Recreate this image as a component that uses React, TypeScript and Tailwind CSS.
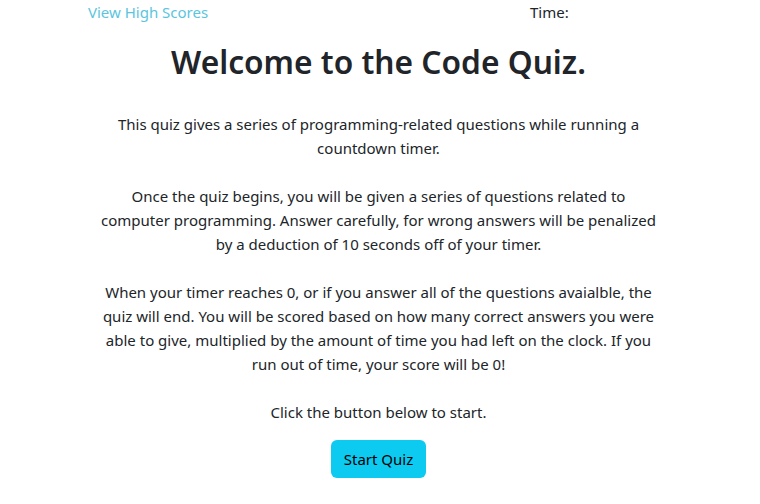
import React from "react";

export default function App() {
  return (
    <div className="min-h-screen bg-white text-[#212529] font-['Noto_Sans',sans-serif] text-[15px] leading-6">
      {/* header bar */}
      <header className="flex h-6">
        <a href="#" className="ml-[88px] w-[442px] text-[#5bc5de]">
          View High Scores
        </a>
        <span>Time:</span>
      </header>

      <main className="flex flex-col items-center pr-[3px]">
        <h1 className="mt-[19px] text-[31.7px] font-semibold leading-[37px]">Welcome to the Code Quiz.</h1>

        <div className="mt-[32px] w-[566px] text-center">
          <p className="mb-6">
            This quiz gives a series of programming-related questions while running a countdown timer.
          </p>
          <p className="mb-6">
            Once the quiz begins, you will be given a series of questions related to computer programming. Answer
            carefully, for wrong answers will be penalized by a deduction of 10 seconds off of your timer.
          </p>
          <p className="mb-6">
            When your timer reaches 0, or if you answer all of the questions avaialble, the quiz will end. You will be
            scored based on how many correct answers you were able to give, multiplied by the amount of time you had
            left on the clock. If you run out of time, your score will be 0!
          </p>
          <p className="mb-4">Click the button below to start.</p>
        </div>

        <button className="h-[38px] w-[95px] rounded-md bg-[#0dcaf0] text-[15px] text-black">Start Quiz</button>
      </main>
    </div>
  );
}
